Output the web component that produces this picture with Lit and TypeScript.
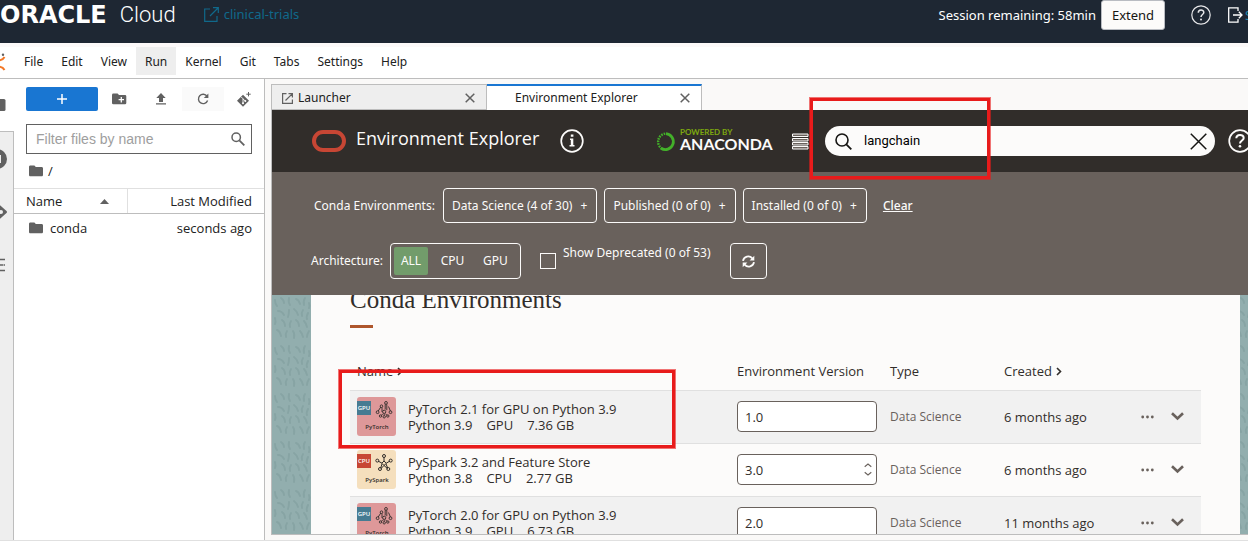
import { LitElement, html, svg, css } from "lit";
import { customElement } from "lit/decorators.js";

type Kind = "pytorch" | "pyspark";

interface Env {
  id: string;
  kind: Kind;
  title: string;
  python: string;
  arch: string;
  size: string;
  version: string;
  choices: string[];
  type: string;
  created: string;
}

const ENVS: Env[] = [
  { id: "e1", kind: "pytorch", title: "PyTorch 2.1 for GPU on Python 3.9", python: "Python 3.9", arch: "GPU", size: "7.36 GB", version: "1.0", choices: [], type: "Data Science", created: "6 months ago" },
  { id: "e2", kind: "pyspark", title: "PySpark 3.2 and Feature Store", python: "Python 3.8", arch: "CPU", size: "2.77 GB", version: "3.0", choices: ["3.0"], type: "Data Science", created: "6 months ago" },
  { id: "e3", kind: "pytorch", title: "PyTorch 2.0 for GPU on Python 3.9", python: "Python 3.9", arch: "GPU", size: "6.73 GB", version: "2.0", choices: [], type: "Data Science", created: "11 months ago" },
];

const folder = html`<svg width="14" height="12" viewBox="0 0 14 12" aria-hidden="true"><path fill="#616161" d="M1.400.500h4l1.400 1.500h5.800c.8 0 1.400.6 1.400 1.300v6.600c0 .8-.6 1.400-1.400 1.400H1.400C.6 11.300 0 10.700 0 9.900V1.900C0 1.100.6.500 1.400.500z"/></svg>`;

const closeIcon = html`<svg width="10" height="10" viewBox="0 0 10 10" aria-hidden="true"><path d="M.7.700 9.300 9.300M9.300.700.700 9.300" stroke="#616161" stroke-width="1.500"/></svg>`;

@customElement("file-browser")
export class FileBrowser extends LitElement {
  static styles = css`
    :host { display: flex; min-width: 0; font: 13px/16px "Open Sans", "Noto Sans", sans-serif; color: #212121; }
    * { box-sizing: border-box; }
    button { border: 0; background: none; padding: 0; font: inherit; color: inherit; display: grid; place-items: center; }
    .rail { flex: none; width: 14px; display: flex; flex-direction: column; background: #eee; overflow: hidden; }
    .rail button { height: 53px; justify-content: start; border-right: 1px solid #bdbdbd; }
    .rail .on { background: #fff; border-right: 0; border-bottom: 1px solid #bdbdbd; }
    .rail .fill { flex: 1; border-right: 1px solid #bdbdbd; }
    .panel { flex: 1; background: #fff; border-right: 1px solid #bdbdbd; min-width: 0; }
    .tools { display: flex; padding: 8px 0 0 12px; height: 33px; }
    .tools button { flex: none; width: 42px; height: 24px; }
    .tools .new { width: 72px; background: #1976d2; border-radius: 2px; }
    .tools .hover { background: #fafafa; }
    .tools .last { flex: 1; }
    .filter { display: flex; align-items: center; margin: 12px 12px 0; height: 30px; border: 1px solid #616161; padding: 0 6px 0 9px; }
    .filter input { flex: 1; min-width: 0; border: 0; outline: 0; padding: 0; background: none; font: 14px/20px "Liberation Sans", Arial, sans-serif; color: #212121; }
    .filter input::placeholder { color: #9e9e9e; opacity: 1; }
    .crumbs { display: flex; align-items: center; gap: 5px; height: 34px; padding-left: 15px; }
    table { width: 100%; border-collapse: collapse; table-layout: fixed; }
    th { height: 25px; padding: 0 12px; font-weight: 500; text-align: left; border-top: 1px solid #e0e0e0; border-bottom: 1px solid #bdbdbd; }
    th:first-child { width: 113px; border-right: 1px solid #e0e0e0; }
    th:last-child, td:last-child { text-align: right; }
    th span { display: flex; justify-content: space-between; align-items: center; padding-right: 6px; }
    td { height: 29px; padding: 0 12px 0 15px; }
    td span { display: flex; align-items: center; gap: 7px; }
  `;

  render() {
    return html`
      <nav class="rail" aria-label="Side tabs">
        <button class="on" aria-label="Files"><svg width="6" height="14" viewBox="0 0 6 14"><path fill="#616161" d="M0 1h4q1.500 0 1.500 1.500v9Q5.500 13 4 13H0z"/></svg></button>
        <button aria-label="Running"><svg width="8" height="20" viewBox="0 0 8 20"><circle cx="-3" cy="10" r="10" fill="#616161"/><path fill="#eee" d="M0 6h1v8H0z"/></svg></button>
        <button aria-label="Git"><svg width="8" height="18" viewBox="0 0 8 18"><path fill="#616161" d="M-2 .500 6.500 8q1 1 0 2L-2 17.500z"/><circle cx="1" cy="9" r="2" fill="#eee"/></svg></button>
        <button aria-label="Contents"><svg width="6" height="14" viewBox="0 0 6 14"><path stroke="#616161" stroke-width="1.500" d="M0 1.500h5M0 7h3.500M4 7h1M0 12.500h5"/></svg></button>
        <div class="fill"></div>
      </nav>
      <section class="panel" aria-label="File browser">
        <div class="tools">
          <button class="new" aria-label="New launcher"><svg width="10" height="10"><path d="M5 0v10M0 5h10" stroke="#fff" stroke-width="1.500"/></svg></button>
          <button aria-label="New folder"><svg width="15" height="12" viewBox="0 0 15 12"><path fill="#616161" d="M1.400.500h4.200L7 2h6q1.300 0 1.300 1.300v6.700q0 1.300-1.300 1.300H1.400Q0 11.300 0 10V1.900Q0 .500 1.400.500z"/><path stroke="#fff" stroke-width="1.300" d="M9.300 4v5.400M6.600 6.700h5.400"/></svg></button>
          <button aria-label="Upload"><svg width="10" height="12" viewBox="0 0 10 12"><path fill="#616161" d="M5 0 9.700 4.900H7V9H3V4.900H.300zM0 10.200h10v1.400H0z"/></svg></button>
          <button class="hover" aria-label="Refresh"><svg width="12" height="12" viewBox="0 0 12 12"><path fill="none" stroke="#616161" stroke-width="1.400" d="M10 3.200A4.700 4.700 0 1 0 10.600 7.500"/><path fill="#616161" d="M11.400.500v4.600H6.800z"/></svg></button>
          <button class="last" aria-label="Clone repository"><svg width="14" height="15" viewBox="0 0 14 15"><path fill="#616161" d="M6 2.800 12 8.800 6 14.800 0 8.800z"/><path fill="none" stroke="#fff" stroke-width=".9" d="M4.300 5 6 6.800v4.700M6 6.900 8.300 9"/><circle cx="6" cy="11.300" r="1" fill="#fff"/><circle cx="8.300" cy="8.900" r="1" fill="#fff"/><path stroke="#616161" d="M11.500 0v4.400M9.300 2.200h4.400"/></svg></button>
        </div>
        <div class="filter">
          <input type="text" aria-label="Filter files by name" placeholder="Filter files by name" />
          <svg width="14" height="14" viewBox="0 0 14 14" aria-hidden="true"><circle cx="5.200" cy="5.200" r="4.200" fill="none" stroke="#616161" stroke-width="1.500"/><path d="m8.300 8.300 5 5" stroke="#616161" stroke-width="1.800"/></svg>
        </div>
        <div class="crumbs">${folder}<span>/</span></div>
        <table>
          <thead><tr>
            <th scope="col"><span>Name <svg width="9" height="5"><path fill="#616161" d="M0 5 4.500 0 9 5z"/></svg></span></th>
            <th scope="col">Last Modified</th>
          </tr></thead>
          <tbody><tr><td><span>${folder}conda</span></td><td>seconds ago</td></tr></tbody>
        </table>
      </section>`;
  }
}

@customElement("env-badge")
export class EnvBadge extends LitElement {
  static properties = { kind: {}, arch: {} };
  declare kind: Kind;
  declare arch: string;

  static styles = css`
    :host { display: block; width: 39px; height: 39px; }
    svg { display: block; }
    text { font-family: "Open Sans", sans-serif; font-weight: 600; text-anchor: middle; }
    .arch { font-size: 6px; fill: #fff; }
    .name { font-size: 6px; fill: #312d2a; }
  `;

  render() {
    const torch = this.kind === "pytorch";
    return html`<svg width="39" height="39" viewBox="0 0 39 39" role="img" aria-label=${this.kind}>
      <rect width="39" height="39" rx="3" fill=${torch ? "#de9899" : "#f5dfbd"}/>
      <rect y="4" width="14" height="14" fill=${torch ? "#467b92" : "#c74634"}/>
      <text class="arch" x="7" y="13.200">${this.arch}</text>
      ${torch
        ? svg`<g fill="none" stroke="#312d2a" stroke-width="0.900">
            <path d="M28.200 7.200v5.300M29.800 7.200v6M25 10.500v4.500M23.800 10 21.200 14M31.500 9.500l2 4.700M26.200 16.500l-2 2M28.200 16.500l2 2M27.200 17v1.500"/>
            <circle cx="29" cy="5.900" r="1.400"/><circle cx="24.500" cy="9.200" r="1.300"/><circle cx="20.600" cy="15.200" r="1.400"/><circle cx="33.500" cy="15.200" r="1.400"/><circle cx="23.500" cy="19" r="1.200"/><circle cx="30.800" cy="19" r="1.200"/><circle cx="27.200" cy="14.800" r="1.600"/><circle cx="27.200" cy="19.800" r="1.200"/>
          </g>`
        : svg`<g fill="none" stroke="#312d2a" stroke-width="1">
            <path d="M27 7v4l-2.200 2.200L27 15.500l2.300-2.300L27 11M21 11l4 2.200M33 11l-3.800 2.200M25 14l-1.300 4M29 14l1.700 4M27 15.500l-3 3M27 15.500l3.500 3"/>
            <circle cx="27" cy="6" r="1.500"/><circle cx="20.300" cy="10.600" r="1.500"/><circle cx="33.700" cy="10.600" r="1.500"/><circle cx="23" cy="19" r="1.500"/><circle cx="31.300" cy="19" r="1.500"/>
          </g>`}
      <text class="name" x="20" y="32.300">${torch ? "PyTorch" : "PySpark"}</text>
    </svg>`;
  }
}

@customElement("env-explorer")
export class EnvExplorer extends LitElement {
  static styles = css`
    :host { display: flex; flex-direction: column; min-width: 0; min-height: 0; background: #faf9f8; padding: 5px 0 5px 6px; font: 13px/16px "Open Sans", "Noto Sans", sans-serif; color: #312d2a; }
    * { box-sizing: border-box; }
    button { background: none; border: 0; padding: 0; margin: 0; font: inherit; color: inherit; }
    svg { display: block; flex: none; }
    .tabs { flex: none; display: flex; height: 26px; font: 12px/16px "Noto Sans", sans-serif; color: #212121; }
    .tab { display: flex; align-items: center; gap: 5px; width: 216px; padding: 2px 11px 0 10px; background: #eee; border: 1px solid #bdbdbd; }
    .tab.on { width: 215px; background: #fff; border-width: 2px 1px 0 0; border-top-color: #1976d2; padding: 0 11px 0 28px; }
    .tab span { flex: 1; }
    .frame { flex: 1; min-height: 0; display: flex; flex-direction: column; border-left: 1px solid #bdbdbd; border-bottom: 1px solid #bdbdbd; overflow: hidden; }
    .bar { flex: none; display: grid; grid-template-columns: 344px 136px 33px 1fr 33px; align-items: center; height: 62px; padding-left: 40px; background: #312d2a; color: #fcfbfa; }
    .brand { display: flex; align-items: center; gap: 10px; }
    .brand h1 { margin: 0 11px 6px 0; font-size: 18px; line-height: 24px; font-weight: 400; }
    .anaconda { display: flex; align-items: center; gap: 4px; font-family: Lato, sans-serif; }
    .anaconda div { display: flex; flex-direction: column; margin-bottom: 4px; }
    .anaconda small { font-size: 8px; line-height: 10px; color: #7da80f; font-weight: 700; }
    .anaconda strong { font-size: 16px; line-height: 14px; font-weight: 700; }
    .search { display: flex; align-items: center; gap: 12px; height: 30px; border-radius: 15px; background: #fcfbfa; padding: 0 8px 0 10px; }
    .search input { flex: 1; min-width: 0; border: 0; outline: 0; padding: 0; background: none; font: 13px/20px Roboto, sans-serif; color: #000; }
    .help { justify-self: end; width: 20px; overflow: visible; }
    .filters { flex: none; display: grid; gap: 20px; padding: 16px 0 16px 39px; background: #69615c; color: #fcfbfa; }
    .line { display: flex; align-items: center; font: 12px/16px "Noto Sans", sans-serif; white-space: nowrap; }
    .line .lab { flex: none; width: 79px; }
    .line .lab.wide { width: 132px; padding-left: 3px; }
    .chip { height: 35px; padding: 0 9px 0 8px; border: 1px solid #fcfbfa; border-radius: 4px; margin-right: 7px; }
    .chip i { font-style: normal; margin-left: 5px; }
    .line a { margin-left: 9px; color: inherit; font-weight: 500; }
    .seg { display: flex; height: 36px; padding: 3px; border: 1px solid #fcfbfa; border-radius: 4px; }
    .seg button { width: 43px; border-radius: 2px; }
    .seg .on { width: 34px; margin-right: 3px; background: #729c6b; }
    .line input { appearance: none; flex: none; width: 16px; height: 16px; margin: 0 7px 0 19px; border: 1px solid #fcfbfa; }
    .line label { align-self: flex-start; padding-top: 2px; }
    .refresh { display: grid; place-items: center; width: 37px; height: 36px; margin-left: 20px; border: 1px solid #fcfbfa; border-radius: 4px; }
    .page { flex: 1; min-height: 0; overflow: hidden; display: flex; padding: 0 8px 0 39px; background: #92aeae url("data:image/svg+xml,%3Csvg xmlns='http://www.w3.org/2000/svg' width='40' height='48' fill='none' stroke='%2387a4a4' stroke-width='2' stroke-linecap='round'%3E%3Cpath d='M3 5q0 4 2 6M9 3q3 2 3 5M17 3q-1 4 1 7M24 4q3 1 4 5M33 3q-2 3-1 7M37 8q1 3 0 5M6 16q4 0 6 4M17 15q0 4-1 7M22 14q3 2 4 6M31 15q-2 3-1 6M36 18q-2 4-1 6M3 23q1 4 0 6M10 25q3 2 3 6M19 26q-2 3-1 6M24 25q3 2 3 6M32 26q2 2 3 6M5 35q3 1 4 6M15 36q-2 3-1 6M21 36q2 3 1 7M28 36q2 2 3 6M37 36q-2 3-2 6'/%3E%3C/svg%3E"); }
    .card { flex: 1; min-width: 0; padding: 0 39px; background: #fcfbfa; }
    .card h2 { margin: -9px 0 0; font: 400 25px/28px "Liberation Serif", Georgia, serif; }
    .card h2::after { content: ""; display: block; width: 23px; height: 3px; margin-top: 11px; background: #ae562c; }
    table { width: 100%; margin-top: 24px; border-collapse: collapse; table-layout: fixed; }
    th { height: 38px; padding: 0; text-align: left; font-weight: 500; }
    .c2 { width: 153px; } .c3 { width: 114px; } .c4 { width: 133px; } .c5 { width: 64px; }
    th svg { display: inline-block; margin-left: 4px; }
    th:first-child { padding-left: 7px; }
    td { height: 53px; padding: 0; border-top: 1px solid #e0e0e0; }
    tbody tr:nth-child(odd) { background: #f1f1f1; }
    .name { display: flex; align-items: center; gap: 12px; padding-left: 7px; }
    .name p { margin: 0; }
    .facts { display: flex; gap: 14px; }
    .ver { position: relative; width: 140px; }
    .ver input, .ver select { appearance: none; display: block; width: 100%; height: 31px; margin: 0; padding: 0 7px; border: 1px solid #69615c; border-radius: 4px; background: #fff; font: inherit; color: #312d2a; }
    .ver svg { position: absolute; right: 4px; top: 9px; pointer-events: none; }
    .type { font-size: 12px; color: #69615c; }
    .acts { display: flex; align-items: center; gap: 17px; padding-left: 4px; }
    .acts button { display: grid; place-items: center; }
  `;

  row(e: Env) {
    return html`<tr>
      <td><div class="name">
        <env-badge .kind=${e.kind} .arch=${e.arch}></env-badge>
        <div><p>${e.title}</p><div class="facts"><span>${e.python}</span><span>${e.arch}</span><span>${e.size}</span></div></div>
      </div></td>
      <td><div class="ver">
        ${e.choices.length
          ? html`<select aria-label="Environment version">${e.choices.map((c) => html`<option>${c}</option>`)}</select>
              <svg width="10" height="13" viewBox="0 0 10 13" aria-hidden="true"><path d="M1.700 3.700 5 1l3.300 2.700M1.700 9.300 5 12l3.300-2.700" fill="none" stroke="#69615c" stroke-width="1.100"/></svg>`
          : html`<input type="text" aria-label="Environment version" readonly .value=${e.version} />`}
      </div></td>
      <td class="type">${e.type}</td>
      <td>${e.created}</td>
      <td><div class="acts">
        <button aria-label="Actions"><svg width="13" height="4"><g fill="#69615c"><circle cx="1.700" cy="2" r="1.400"/><circle cx="6.500" cy="2" r="1.400"/><circle cx="11.300" cy="2" r="1.400"/></g></svg></button>
        <button aria-label="Expand"><svg width="13" height="9"><path d="m1 1.200 5.500 5.300L12 1.200" fill="none" stroke="#69615c" stroke-width="2.600"/></svg></button>
      </div></td>
    </tr>`;
  }

  render() {
    const chevron = html`<svg width="6" height="9" viewBox="0 0 6 9"><path d="m1 1 3.500 3.500L1 8" fill="none" stroke="#312d2a" stroke-width="1.600"/></svg>`;
    return html`
      <div class="tabs" role="tablist">
        <div class="tab" role="tab"><svg width="11" height="11" viewBox="0 0 11 11"><path d="M4.500.600H.600v9.800h9.800V6.500M6.500.600h3.900v3.900M10.200.800 3.500 7.500" fill="none" stroke="#616161" stroke-width="1.200"/></svg><span>Launcher</span><button aria-label="Close Launcher">${closeIcon}</button></div>
        <div class="tab on" role="tab" aria-selected="true"><span>Environment Explorer</span><button aria-label="Close Environment Explorer">${closeIcon}</button></div>
      </div>
      <div class="frame">
        <header class="bar">
          <div class="brand">
            <svg width="34" height="22" viewBox="0 0 34 22"><rect x="2" y="2" width="30" height="18" rx="9" fill="none" stroke="#c74634" stroke-width="4"/></svg>
            <h1>Environment Explorer</h1>
            <svg width="24" height="24" viewBox="0 0 24 24"><circle cx="12" cy="12" r="10.800" fill="none" stroke="#fcfbfa" stroke-width="1.700"/><path fill="#fcfbfa" d="M10.800 5.500h2.600v2.300h-2.600zM10 9.500h3.300V16h1.200v1.500H9.500V16h1.300v-5H10z"/></svg>
          </div>
          <div class="anaconda">
            <svg width="20" height="21" viewBox="0 0 20 21"><path d="M10 2.600A8 8 0 1 1 5 17.300" fill="none" stroke="#43b02a" stroke-width="2.800"/><path d="M6 17.800A8.300 8.300 0 0 1 10 2.500" fill="none" stroke="#43b02a" stroke-width="2.400" stroke-dasharray="1.600 1"/></svg>
            <div><small>POWERED BY</small><strong>ANACONDA</strong></div>
          </div>
          <svg width="17" height="17" viewBox="0 0 17 17"><path d="M.500 1h15.500v2.500H.500zM.500 5.500h15.500v2.500H.500zM.500 9.500h15.500v2.500H.500zM.500 13.500h15.500V16H.500z" fill="#69615c" stroke="#fcfbfa"/></svg>
          <div class="search">
            <svg width="17" height="17" viewBox="0 0 17 17"><circle cx="7" cy="7" r="6" fill="none" stroke="#161513" stroke-width="1.600"/><path d="m11.300 11.300 5 5" stroke="#161513" stroke-width="1.800"/></svg>
            <input type="text" aria-label="Search environments" .value=${"langchain"} />
            <button aria-label="Clear search"><svg width="17" height="17"><path d="m.800.800 15.500 15.500M16.300.800.800 16.300" stroke="#161513" stroke-width="1.500"/></svg></button>
          </div>
          <button class="help" aria-label="Help"><svg width="24" height="24" viewBox="0 0 24 24"><circle cx="12" cy="12" r="10.800" fill="none" stroke="#fcfbfa" stroke-width="1.700"/><path d="M8.300 9.300c0-4.500 7.400-4.500 7.400-.300 0 2.500-3.700 2.500-3.700 5.500" fill="none" stroke="#fcfbfa" stroke-width="2"/><circle cx="12" cy="17.300" r="1.300" fill="#fcfbfa"/></svg></button>
        </header>
        <div class="filters">
          <div class="line">
            <span class="lab wide">Conda Environments:</span>
            <button class="chip">Data Science (4 of 30) <i>+</i></button>
            <button class="chip">Published (0 of 0) <i>+</i></button>
            <button class="chip">Installed (0 of 0) <i>+</i></button>
            <a href="#clear">Clear</a>
          </div>
          <div class="line">
            <span class="lab">Architecture:</span>
            <div class="seg"><button class="on">ALL</button><button>CPU</button><button>GPU</button></div>
            <input type="checkbox" id="dep" /><label for="dep">Show Deprecated (0 of 53)</label>
            <button class="refresh" aria-label="Refresh"><svg width="13" height="13" viewBox="0 0 13 13"><path d="M1 5.800A5.300 5.300 0 0 1 10.300 3.300M12 7.200A5.300 5.300 0 0 1 2.700 9.700" fill="none" stroke="#fcfbfa" stroke-width="1.800"/><path fill="#fcfbfa" d="M12.300.800v4.700H7.600zM.700 12.200V7.500h4.700z"/></svg></button>
          </div>
        </div>
        <div class="page"><main class="card">
          <h2>Conda Environments</h2>
          <table>
            <thead><tr>
              <th scope="col">Name${chevron}</th><th class="c2" scope="col">Environment Version</th><th class="c3" scope="col">Type</th><th class="c4" scope="col">Created${chevron}</th><th class="c5"></th>
            </tr></thead>
            <tbody>${ENVS.map((e) => this.row(e))}</tbody>
          </table>
        </main></div>
      </div>`;
  }
}

@customElement("app-root")
export class AppRoot extends LitElement {
  static styles = css`
    :host { position: relative; display: grid; grid-template-rows: 43px 36px minmax(0, 1fr); height: 100vh; overflow: hidden; background: #faf9f8; font: 13px/16px "Noto Sans", "Open Sans", sans-serif; }
    * { box-sizing: border-box; }
    svg { display: block; flex: none; }
    .top { display: flex; align-items: flex-start; background: #1e2733; color: #fff; white-space: nowrap; }
    .logo { display: flex; align-items: center; gap: 13px; height: 30px; }
    .logo b { font: 700 24px/30px "DejaVu Sans", sans-serif; }
    .logo span { font: 300 22px/30px Roboto, sans-serif; }
    .proj { display: flex; align-items: center; gap: 5px; height: 28px; margin-left: 28px; color: #10698b; text-decoration: none; }
    .right { display: flex; align-items: center; height: 30px; margin-left: auto; }
    .right button { border: 0; background: none; padding: 0; font: inherit; color: inherit; }
    .right .extend { width: 64px; height: 30px; margin: 0 26px 0 5px; border-radius: 3px; background: #fcfbfa; border: 1px solid #b9bcc2; color: #161513; }
    .out { display: flex; align-items: center; gap: 2px; width: 20px; margin-left: 17px; color: #1c88ad; text-decoration: none; }
    .menu { display: flex; align-items: stretch; border-top: 4px solid #fcf9f9; border-bottom: 1px solid #bdbdbd; background: #fff; }
    .menu svg { margin-right: 9px; align-self: center; }
    .menu button { border: 0; background: none; padding: 2px 9px 0; margin-bottom: 3px; font: inherit; font-size: 12px; color: #212121; }
    .menu .on { background: #eee; }
    .body { display: grid; grid-template-columns: 265px minmax(0, 1fr); min-height: 0; border-bottom: 1px solid #e0e0e0; }
    .mark { position: absolute; border: 3px solid #e81b1b; box-shadow: 0 0 0 1px rgba(232, 27, 27, 0.6); pointer-events: none; }
    .mark.search { left: 810px; top: 98px; width: 180px; height: 81px; }
    .mark.row { left: 339px; top: 370px; width: 336px; height: 78px; }
  `;

  render() {
    const menus = ["File", "Edit", "View", "Run", "Kernel", "Git", "Tabs", "Settings", "Help"];
    return html`
      <header class="top">
        <div class="logo"><b>ORACLE</b><span>Cloud</span></div>
        <a class="proj" href="#project"><svg width="15" height="15" viewBox="0 0 15 15"><path d="M6 2H.700v12.300H13V9M9 .700h5.300V6M14 1 6 9" fill="none" stroke="currentColor" stroke-width="1.200"/></svg>clinical-trials</a>
        <div class="right">
          <span>Session remaining: 58min</span>
          <button class="extend">Extend</button>
          <button aria-label="Help"><svg width="20" height="20" viewBox="0 0 20 20"><circle cx="10" cy="10" r="9.200" fill="none" stroke="#e8e8ea" stroke-width="1.200"/><path d="M7.300 7.800c0-3.600 5.500-3.600 5.500-.300 0 2-2.800 2.100-2.800 4.400" fill="none" stroke="#e8e8ea" stroke-width="1.500"/><circle cx="10" cy="14.400" r="1" fill="#e8e8ea"/></svg></button>
          <a class="out" href="#signout"><svg width="15" height="16" viewBox="0 0 15 16"><path d="M10 4V.800H.700v14.400H10V12M5 8h9M10.800 4.800 14 8l-3.200 3.200" fill="none" stroke="#fff" stroke-width="1.300"/></svg>Sign Out</a>
        </div>
      </header>
      <nav class="menu" aria-label="Main menu">
        <svg width="6" height="20" viewBox="0 0 6 20"><g fill="none" stroke="#f37726" stroke-width="2"><path d="M-1 7.500Q3 7 4.500 4M-1 13.500Q3 14 4.500 17"/></g><circle cx="3" cy="1.700" r="1.200" fill="#616161"/></svg>
        ${menus.map((m) => html`<button class=${m === "Run" ? "on" : ""}>${m}</button>`)}
      </nav>
      <div class="body"><file-browser></file-browser><env-explorer></env-explorer></div>
      <div class="mark search"></div>
      <div class="mark row"></div>`;
  }
}
